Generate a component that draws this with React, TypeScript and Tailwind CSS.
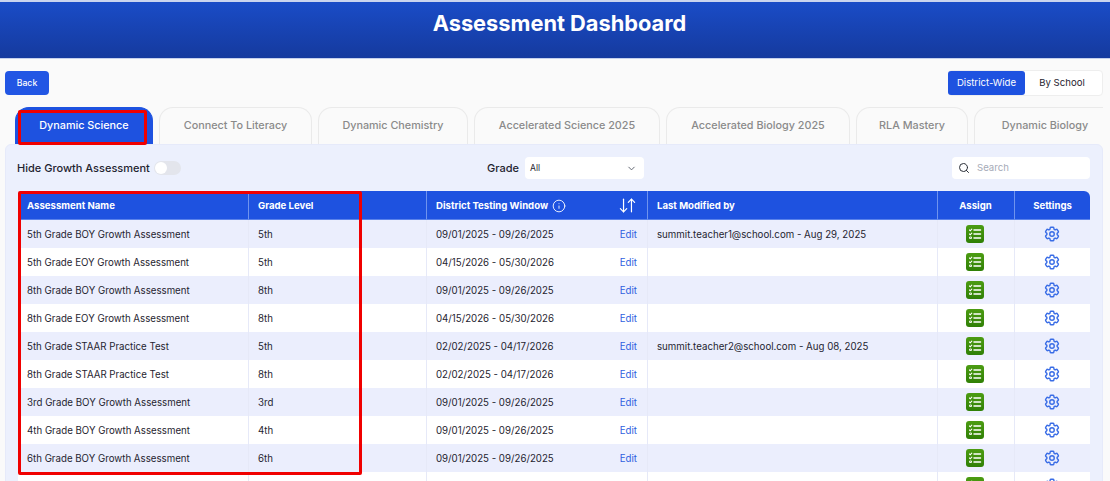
import { ArrowDownUp, ChevronDown, Info, Search } from "lucide-react";
import { HiOutlineCog6Tooth } from "react-icons/hi2";

const tabs = [
  { label: "Dynamic Science", width: "w-[138px]", active: true },
  { label: "Connect To Literacy", width: "w-[153px]" },
  { label: "Dynamic Chemistry", width: "w-[150px]" },
  { label: "Accelerated Science 2025", width: "w-[186px]" },
  { label: "Accelerated Biology 2025", width: "w-[184px]" },
  { label: "RLA Mastery", width: "w-[112px]" },
  { label: "Dynamic Biology", width: "w-[142px]" },
];

const rows = [
  ["5th Grade BOY Growth Assessment", "5th", "09/01/2025 - 09/26/2025", "summit.teacher1@school.com - Aug 29, 2025"],
  ["5th Grade EOY Growth Assessment", "5th", "04/15/2026 - 05/30/2026", ""],
  ["8th Grade BOY Growth Assessment", "8th", "09/01/2025 - 09/26/2025", ""],
  ["8th Grade EOY Growth Assessment", "8th", "04/15/2026 - 05/30/2026", ""],
  ["5th Grade STAAR Practice Test", "5th", "02/02/2025 - 04/17/2026", "summit.teacher2@school.com - Aug 08, 2025"],
  ["8th Grade STAAR Practice Test", "8th", "02/02/2025 - 04/17/2026", ""],
  ["3rd Grade BOY Growth Assessment", "3rd", "09/01/2025 - 09/26/2025", ""],
  ["4th Grade BOY Growth Assessment", "4th", "09/01/2025 - 09/26/2025", ""],
  ["6th Grade BOY Growth Assessment", "6th", "09/01/2025 - 09/26/2025", ""],
  ["", "", "", ""], // only the top of the icons shows in this row
];

function AssignIcon() {
  return (
    <div className="mx-auto flex size-[18px] -translate-x-px items-center justify-center rounded-[3px] bg-gradient-to-b from-[#4c9c12] to-[#2f8006]">
      <svg width="14" height="14" viewBox="0 0 14 14" fill="none" stroke="white" strokeLinecap="round">
        <path d="M6 3h6.5M6 7h6.5M6 11h6.5" strokeWidth="1.5" />
        <path d="M1.5 3l.8.8L3.8 2.2M1.5 7l.8.8 1.5-1.6" strokeWidth="1.1" />
        <path d="M2 10h1.5v1.5H2z" strokeWidth="0.9" />
      </svg>
    </div>
  );
}

function Row({ row, index }: { row: string[]; index: number }) {
  return (
    <tr className={`h-[28px] ${index % 2 === 0 ? "bg-[#ebeefd]" : "bg-white"}`}>
      <td className="border-r border-[#e6e9f8] pt-[2px] pl-[9px] text-[#1f2430]">{row[0]}</td>
      <td className="border-r border-[#e6e9f8] pt-[2px] pl-[9px] text-[#1f2430]">{row[1]}</td>
      <td className="border-r border-[#e6e9f8] px-[9px] pt-[2px] text-[#1f2430]">
        {row[2] ? (
          <div className="flex items-center justify-between">
            <span>{row[2]}</span>
            <span className="mr-[1px] text-[#2f5fe0]">Edit</span>
          </div>
        ) : null}
      </td>
      <td className="border-r border-[#e6e9f8] pt-[2px] pl-[9px] text-[#1f2430]">{row[3]}</td>
      <td className="border-r border-[#e6e9f8]">
        <AssignIcon />
      </td>
      <td>
        <HiOutlineCog6Tooth size={18} strokeWidth={1.9} className="mx-auto -translate-x-px text-[#3a6de6]" />
      </td>
    </tr>
  );
}

export default function App() {
  return (
    <div className="relative h-[481px] w-[1110px] overflow-hidden bg-[#fafafa] font-['Inter',sans-serif]">
      <header className="flex h-[59px] items-start justify-center border-t-2 border-b border-t-[#c9d4ef] border-b-[#c5d0ec] bg-gradient-to-b from-[#1a4cc7] to-[#153a9e] pt-[8px] pl-[9px]">
        <h1 className="text-[21.8px] leading-[27px] font-bold text-white">Assessment Dashboard</h1>
      </header>

      <div className="flex items-center justify-between pt-[11px] pr-[7px] pl-[5px]">
        <button className="h-[24px] w-[44px] rounded-[4px] bg-[#2256e4] pt-px text-[8.7px] font-medium text-white">Back</button>
        <div className="flex h-[26px] w-[155px] rounded-[4px] border border-[#eeeeee] bg-white text-[9.6px]">
          <div className="-ml-px flex w-[77px] items-center justify-center rounded-[3px] bg-[#1e52e0] text-white">District-Wide</div>
          <div className="flex flex-1 items-center justify-center pr-[3px] text-[#1f2430]">By School</div>
        </div>
      </div>

      <div className="mt-[11px] mr-[7px] ml-[15px] flex h-[37px] gap-[6px] overflow-hidden">
        {tabs.map((tab) => (
          <div
            key={tab.label}
            className={`flex shrink-0 items-start justify-center rounded-t-[14px] border border-b-0 pt-[11px] text-[10.8px] leading-[14px] font-medium ${tab.width} ${
              tab.active ? "border-[#1e52e0] bg-[#1e52e0] text-white" : "border-[#eaeaea] bg-[#fafafa] text-[#8a8a8a]"
            }`}
          >
            {tab.label}
          </div>
        ))}
      </div>

      <main className="mr-[7px] ml-[5px] h-[400px] rounded-[6px] border border-[#e6eafa] bg-[#ecf0fd] px-[12px] pt-[11px]">
        <div className="flex h-[24px] items-center justify-between">
          <div className="-ml-px flex w-[164px] items-center justify-between">
            <span className="text-[11px] font-medium whitespace-nowrap text-[#1f2430]">Hide Growth Assessment</span>
            <span className="relative h-[14px] w-[27px] rounded-full bg-[#e3e5ec]">
              <span className="absolute top-[1px] left-[1px] size-[12px] rounded-full bg-white" />
            </span>
          </div>
          <div className="mr-[2px] flex items-center gap-[6px]">
            <span className="text-[11px] font-medium text-[#1f2430]">Grade</span>
            <div className="flex h-[22px] w-[119px] items-center justify-between rounded-[4px] bg-white pr-[7px] pl-[5px] text-[8.6px] text-[#1f2430]">
              All
              <ChevronDown size={11} className="text-[#555b66]" />
            </div>
          </div>
          <div className="flex h-[22px] w-[138px] items-center gap-[7px] rounded-[4px] bg-white pl-[6px] text-[9.6px] text-[#a6abb8]">
            <Search size={12} className="text-[#2a2f38]" />
            Search
          </div>
        </div>

        <table className="mt-[11px] w-[1072px] table-fixed border-separate border-spacing-0 text-[9.7px]">
          <colgroup>
            <col className="w-[231px]" />
            <col className="w-[178px]" />
            <col className="w-[221px]" />
            <col className="w-[290px]" />
            <col className="w-[77px]" />
            <col className="w-[75px]" />
          </colgroup>
          <thead>
            <tr className="h-[29px] text-[9.6px] font-bold text-white">
              <th className="rounded-tl-[6px] border-r border-b border-[#6f93ee] border-b-[#5a82ea] bg-[#1e52e0] pt-[2px] pl-[9px] text-left">Assessment Name</th>
              <th className="border-r border-b border-[#6f93ee] border-b-[#5a82ea] bg-[#1e52e0] pt-[2px] pl-[9px] text-left">Grade Level</th>
              <th className="border-r border-b border-[#6f93ee] border-b-[#5a82ea] bg-[#1e52e0] px-[9px] pt-[2px] text-left">
                <div className="flex items-center justify-between">
                  <span className="flex items-center gap-[4px]">
                    District Testing Window
                    <Info size={14} strokeWidth={1.5} />
                  </span>
                  <ArrowDownUp size={19} strokeWidth={1.5} className="mr-[1px] -mt-px" />
                </div>
              </th>
              <th className="border-r border-b border-[#6f93ee] border-b-[#5a82ea] bg-[#1e52e0] pt-[2px] pl-[9px] text-left">Last Modified by</th>
              <th className="border-r border-b border-[#6f93ee] border-b-[#5a82ea] bg-[#1e52e0] pt-[2px] pr-[1px] text-center">Assign</th>
              <th className="rounded-tr-[6px] border-b border-[#5a82ea] bg-[#1e52e0] pt-[2px] text-center">Settings</th>
            </tr>
          </thead>
          <tbody>
            {rows.map((row, index) => (
              <Row key={index} row={row} index={index} />
            ))}
          </tbody>
        </table>
      </main>

      {/* red annotation boxes drawn over the screenshot */}
      <div className="absolute top-[110px] left-[18px] h-[35px] w-[129px] rounded-[2px] border-[3px] border-[#f00000]" />
      <div className="absolute top-[191px] left-[18px] h-[284px] w-[344px] rounded-[2px] border-[3px] border-[#f00000]" />
    </div>
  );
}
